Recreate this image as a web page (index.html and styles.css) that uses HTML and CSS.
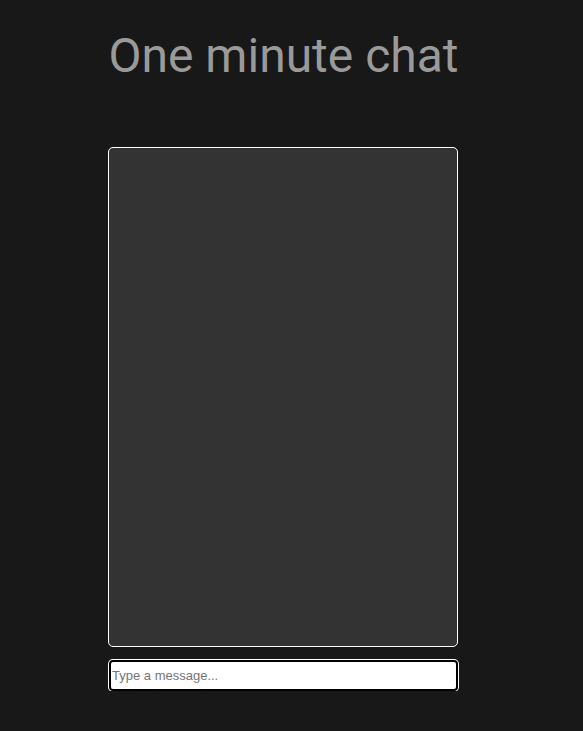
FILE: index.html
```html
<!DOCTYPE html>
<html>
<head>
<meta charset="utf-8">
<link rel="stylesheet" href="styles.css">
</head>
<body>
<main class="app">
  <h1 class="title">One minute chat</h1>
  <div class="messages"></div>
  <input class="message-input" type="text" placeholder="Type a message...">
</main>
</body>
</html>
```
FILE: styles.css
```css
html, body {
  margin: 0;
  padding: 0;
  background: #181818;
}
body {
  font-family: Roboto, "Liberation Sans", sans-serif;
}
.app {
  width: 351px;
  margin-left: 108px;
  display: flex;
  flex-direction: column;
}
.title {
  margin: 24px 0 0 0;
  font-weight: 400;
  font-size: 48px;
  line-height: 64px;
  color: #9a9a9a;
  text-align: center;
  white-space: nowrap;
}
.messages {
  margin-top: 59px;
  width: 348px;
  height: 498px;
  background: #333333;
  border: 1px solid #ffffff;
  border-radius: 5px;
}
.message-input {
  margin-top: 13px;
  margin-left: 1px;
  box-sizing: border-box;
  width: 349px;
  height: 31px;
  padding: 0 1px;
  background: #ffffff;
  border: 2px solid #000000;
  box-shadow: 0 0 0 1px #ffffff;
  border-radius: 4px;
  font-family: "Liberation Sans", Arial, sans-serif;
  font-size: 13px;
  color: #000;
  outline: none;
}
.message-input::placeholder {
  color: #757575;
}
```
